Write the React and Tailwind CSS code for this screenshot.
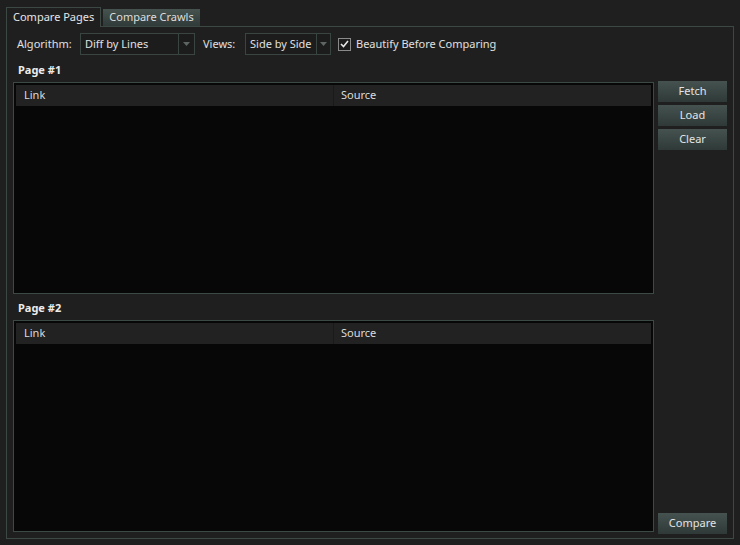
import React from 'react';

const font = { fontFamily: '"Noto Sans", "DejaVu Sans", sans-serif' };

function Combo({ value, width }) {
  return (
    <div className={`flex h-[22px] border border-[#3a4542] bg-[#1c1c1c] ${width}`}>
      <div className="flex flex-1 items-center whitespace-nowrap px-[4px] text-[#e0e0e0]">{value}</div>
      <div className="flex w-[16px] items-center justify-center border-l border-[#3a4542]">
        <svg width="7" height="4" viewBox="0 0 7 4">
          <path d="M0 0 L7 0 L3.5 4 Z" fill="#5d6664" />
        </svg>
      </div>
    </div>
  );
}

function SideButton({ children }) {
  return (
    <button className="h-[21px] w-[69px] bg-gradient-to-b from-[#45524f] to-[#2f3a38] text-[11px] text-[#e4e4e4]">
      {children}
    </button>
  );
}

function PageTable() {
  return (
    <div className="flex flex-1 flex-col border border-[#3b4a46] bg-[#070707] p-[2px]">
      <div className="flex h-[21px] bg-[#222222] text-[#dcdcdc]">
        <div className="flex w-[318px] items-center border-r border-[#1a1a1a] pl-[8px]">Link</div>
        <div className="flex flex-1 items-center pl-[7px]">Source</div>
      </div>
      <div className="flex-1" />
    </div>
  );
}

export default function App() {
  return (
    <div className="h-[545px] w-[740px] bg-[#1f1f1f] px-[6px] pt-[7px] text-[11px]" style={font}>
      <div className="flex items-end">
        <div className="relative z-10 -mb-px flex h-[20px] items-center border border-b-0 border-[#3b4844] bg-[#1f1f1f] px-[6px] text-[#e6e6e6]">
          Compare Pages
        </div>
        <div className="ml-[2px] flex h-[17px] items-center bg-gradient-to-b from-[#46534f] to-[#303b39] px-[6px] text-[#dedede]">
          Compare Crawls
        </div>
      </div>
      <div className="flex h-[513px] w-[728px] flex-col border border-[#3b4844] px-[6px] pb-[4px]">
        <div className="mt-[6px] flex items-center whitespace-nowrap text-[#e0e0e0]">
          <span className="ml-[4px] w-[63px]">Algorithm:</span>
          <Combo value="Diff by Lines" width="w-[115px]" />
          <span className="ml-[8px] w-[42px]">Views:</span>
          <Combo value="Side by Side" width="w-[86px]" />
          <div className="ml-[7px] flex h-[13px] w-[13px] items-center justify-center border border-[#8a8a8a] bg-[#1c1c1c]">
            <svg width="9" height="8" viewBox="0 0 9 8">
              <path d="M1 4 L3.5 6.5 L8 1" stroke="#e6e6e6" strokeWidth="1.6" fill="none" />
            </svg>
          </div>
          <span className="ml-[5px]">Beautify Before Comparing</span>
        </div>

        <div className="mt-[7px] flex flex-1 gap-[4px]">
          <div className="flex flex-1 flex-col">
            <div className="ml-[5px] h-[20px] font-bold text-[#ececec]">Page #1</div>
            <div className="flex h-[212px]">
              <PageTable />
            </div>
            <div className="ml-[5px] mt-[6px] h-[20px] font-bold text-[#ececec]">Page #2</div>
            <div className="flex h-[212px]">
              <PageTable />
            </div>
          </div>
          <div className="flex w-[69px] flex-col gap-[3px] pt-[19px]">
            <SideButton>Fetch</SideButton>
            <SideButton>Load</SideButton>
            <SideButton>Clear</SideButton>
            <div className="flex-1" />
            <SideButton>Compare</SideButton>
          </div>
        </div>
      </div>
    </div>
  );
}
